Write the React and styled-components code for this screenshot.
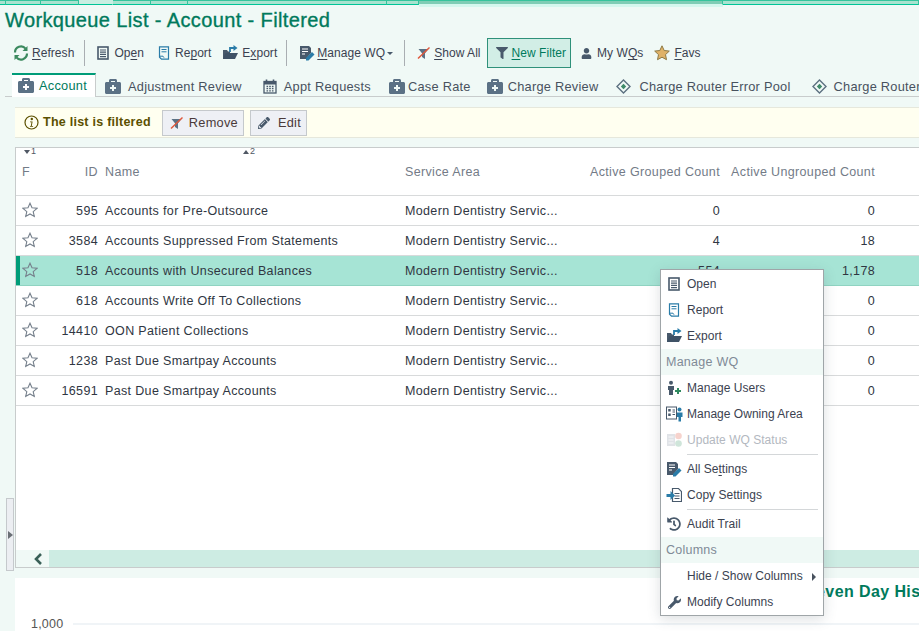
import styled, { createGlobalStyle } from "styled-components";
import { FaBriefcaseMedical, FaFilter, FaUser, FaWrench, FaHistory, FaPencilAlt } from "react-icons/fa";

const GlobalStyle = createGlobalStyle`
  html, body {
    margin: 0;
    padding: 0;
    height: 631px;
    overflow: hidden;
    background: #f0f9f6;
    font-family: "Liberation Sans", Arial, sans-serif;
    font-size: 12.5px;
    letter-spacing: 0.35px;
    color: #3b4250;
  }
`;

const Page = styled.div`
  position: relative;
  width: 919px;
  height: 631px;
  overflow: hidden;
  display: flex;
  flex-direction: column;
`;

const TopStrip = styled.div`
  height: 5px;
  flex: none;
  display: flex;
`;

const StripTab = styled.div`
  width: ${(p) => p.$w}px;
  flex: none;
  box-sizing: border-box;
  background: ${(p) => (p.$active ? "#c9eee2" : p.$muted ? "#7fcdb5" : "#a8e2cf")};
  border-top: 1px solid ${(p) => (p.$active ? "#c9eee2" : "#35c49c")};
  border-right: 1px solid ${(p) => (p.$active ? "#c9eee2" : "#35c49c")};
  border-bottom: 1px solid ${(p) => (p.$muted ? "#d5f7ee" : "#00c497")};
  box-shadow: ${(p) => (p.$muted ? "0 2px 0 #d5f7ee" : "none")};
`;

const Title = styled.h1`
  margin: 0;
  height: 32px;
  padding: 3px 0 0 5px;
  box-sizing: border-box;
  font-size: 20px;
  line-height: 24px;
  font-weight: 400;
  letter-spacing: 0.38px;
  color: #007a5c;
  -webkit-text-stroke: 0.35px #007a5c;
`;

const Toolbar = styled.div`
  height: 30px;
  margin-top: 1px;
  flex: none;
  display: flex;
  align-items: center;
  padding-left: 13px;
  white-space: nowrap;
  font-size: 12px;
  letter-spacing: 0.05px;
`;

const ToolButton = styled.div`
  display: flex;
  align-items: center;
  box-sizing: border-box;
  height: ${(p) => (p.$active ? "30px" : "auto")};
  gap: ${(p) => p.$gap ?? 4}px;
  margin-left: ${(p) => p.$ml || 0}px;
  padding: ${(p) => (p.$active ? "0 4px 0 8px" : "0")};
  color: ${(p) => (p.$active ? "#007a5c" : "#3b4250")};
  background: ${(p) => (p.$active ? "#d2eee6" : "transparent")};
  border: ${(p) => (p.$active ? "1px solid #2f917a" : "none")};
`;

const Key = styled.span`
  text-decoration: underline;
  text-underline-offset: 2px;
`;

const ToolSep = styled.div`
  width: 1px;
  height: 26px;
  background: #a9aeb2;
  margin-left: ${(p) => p.$ml}px;
`;

const Caret = styled.span`
  width: 0;
  height: 0;
  border-left: 3px solid transparent;
  border-right: 3px solid transparent;
  border-top: 3px solid #48596b;
`;

const Tabs = styled.div`
  height: 24px;
  box-sizing: border-box;
  margin: 5px 0 0 5px;
  padding-left: 7px;
  flex: none;
  display: flex;
  align-items: stretch;
  border-bottom: 1px solid #c8cccc;
  white-space: nowrap;
  letter-spacing: 0.25px;
`;

const Tab = styled.div`
  display: flex;
  align-items: center;
  gap: ${(p) => p.$gap ?? 7}px;
  margin-left: ${(p) => p.$ml || 0}px;
  padding: ${(p) => (p.$active ? "0 8px 2px 6px" : "3px 0 0 0")};
  color: ${(p) => (p.$active ? "#007a5c" : "#48525e")};
  background: ${(p) => (p.$active ? "#ffffff" : "transparent")};
  border-top: ${(p) => (p.$active ? "2px solid #009c78" : "none")};
  border-right: ${(p) => (p.$active ? "1px solid #c8cccc" : "none")};
  margin-bottom: ${(p) => (p.$active ? "-1px" : "0")};
  font-size: 12.8px;
`;

const Banner = styled.div`
  margin: 10px 0 0 15px;
  height: 31px;
  flex: none;
  background: #fffff0;
  border-top: 1px solid #e6e8dc;
  border-bottom: 1px solid #e6e8dc;
  box-sizing: border-box;
  display: flex;
  align-items: center;
  padding-left: 9px;
`;

const BannerText = styled.strong`
  margin: -2px 11px 0 4px;
  color: #5c5000;
  font-size: 12.5px;
  letter-spacing: 0.25px;
`;

const BannerButton = styled.div`
  height: 26px;
  box-sizing: border-box;
  display: flex;
  align-items: center;
  gap: ${(p) => p.$gap}px;
  padding: 0 5px 0 7px;
  margin-right: 6px;
  background: #eef0f5;
  border: 1px solid #c5c9cc;
  color: #4a3a3a;
  font-size: 12.8px;
  letter-spacing: 0.25px;
`;

const TablePanel = styled.div`
  margin: 9px 0 0 15px;
  height: 421px;
  flex: none;
  background: #fff;
  border-left: 1px solid #c8cccc;
  border-top: 1px solid #c8cccc;
  border-bottom: 1px solid #c8cccc;
  box-sizing: border-box;
  display: flex;
  flex-direction: column;
`;

const Row = styled.div`
  display: grid;
  grid-template-columns: 40px 42px 300px 162px 160px 155px;
  column-gap: 0;
  align-items: center;
  height: 30px;
  box-sizing: border-box;
  border-bottom: 1px solid ${(p) => (p.$selected ? "#8fd3c1" : "#d8dadb")};
  background: ${(p) => (p.$selected ? "#a6e4d5" : "#fff")};
  box-shadow: ${(p) => (p.$selected ? "inset 4px 0 0 #009c78" : "none")};
  color: #2f3642;
  white-space: nowrap;
`;

const HeaderRow = styled(Row)`
  height: 48px;
  align-items: start;
  padding-top: 16px;
  color: #737b87;
  position: relative;
`;

const SortMark = styled.span`
  position: absolute;
  top: -1px;
  left: ${(p) => p.$x}px;
  font-size: 9px;
  line-height: 9px;
  color: #505864;
  display: flex;
  align-items: center;
  gap: 1px;
  letter-spacing: 0;
`;

const SortArrow = styled.i`
  width: 0;
  height: 0;
  border-left: 3px solid transparent;
  border-right: 3px solid transparent;
  ${(p) => (p.$up ? "border-bottom: 4px solid #505864;" : "border-top: 4px solid #505864;")}
`;

const Cell = styled.div`
  text-align: ${(p) => (p.$right ? "right" : "left")};
  padding-left: ${(p) => p.$pl || 0}px;
  padding-top: 1px;
`;

const StarCell = styled.div`
  padding-left: 6px;
  margin-top: -2px;
`;

const Rows = styled.div`
  flex: 1;
`;

const ScrollBar = styled.div`
  height: 17px;
  flex: none;
  display: flex;
  background: #f0f9f6;
`;

const ScrollButton = styled.div`
  width: 33px;
  display: flex;
  align-items: center;
  justify-content: center;
  padding-left: 10px;
  box-sizing: border-box;
`;

const ScrollThumb = styled.div`
  flex: 1;
  background: #cdece3;
`;

const ChartPanel = styled.div`
  margin: 10px 0 0 15px;
  flex: 1;
  background: #fff;
  overflow: hidden;
`;

const ChartTitle = styled.div`
  margin: 5px 0 0 790px;
  font-size: 16px;
  line-height: 18px;
  font-weight: 700;
  letter-spacing: 0.4px;
  color: #007a5c;
  white-space: nowrap;
`;

const ChartAxis = styled.div`
  display: flex;
  align-items: center;
  gap: 10px;
  margin: 16px 0 0 16px;
  letter-spacing: 0.2px;
  color: #555;
`;

const GridLine = styled.div`
  flex: 1;
  height: 2px;
  background: #f0f4f7;
`;

const Collapse = styled.div`
  position: absolute;
  left: 6px;
  top: 498px;
  width: 6px;
  height: 71px;
  background: #eceef2;
  border: 1px solid #c5c9cc;
  display: flex;
  align-items: center;
`;

const CollapseArrow = styled.span`
  border-top: 4px solid transparent;
  border-bottom: 4px solid transparent;
  border-left: 5px solid #6a6f75;
  margin-left: 1px;
`;

const Menu = styled.div`
  position: absolute;
  left: 660px;
  top: 269px;
  width: 164px;
  height: 347px;
  box-sizing: border-box;
  padding: 1px 0;
  background: #fff;
  border: 1px solid #9fa5a8;
  box-shadow: 0 3px 12px rgba(60, 80, 90, 0.18);
`;

const MenuItem = styled.div`
  height: 26px;
  display: flex;
  align-items: center;
  padding-left: 26px;
  position: relative;
  color: ${(p) => (p.$disabled ? "#b3b8c0" : "#3b4250")};
  white-space: nowrap;
  font-size: 12px;
  letter-spacing: 0.02px;
`;

const MenuIcon = styled.span`
  position: absolute;
  left: 4px;
  top: 5px;
  width: 18px;
  height: 16px;
  display: flex;
  align-items: center;
  justify-content: center;
`;

const MenuHead = styled.div`
  height: 26px;
  display: flex;
  align-items: center;
  padding-left: 5px;
  background: #f0f9f6;
  color: #7f8a96;
  letter-spacing: 0.25px;
`;

const MenuSep = styled.div`
  height: 3px;
  margin-left: 26px;
  margin-right: 5px;
  display: flex;
  align-items: center;
  &::after {
    content: "";
    flex: 1;
    height: 1px;
    background: #d4d7d9;
  }
`;

const SubArrow = styled.span`
  position: absolute;
  right: 7px;
  top: 10px;
  border-top: 4px solid transparent;
  border-bottom: 4px solid transparent;
  border-left: 4px solid #48525e;
`;

const slate = "#48596b";
const blue = "#2a7ca8";

function Svg({ w = 16, h = 16, children }) {
  return (
    <svg width={w} height={h} viewBox={`0 0 ${w} ${h}`} fill="none" style={{ flex: "none", display: "block" }}>
      {children}
    </svg>
  );
}

const RefreshIcon = () => (
  <Svg>
    <path d="M2 7.5A6 6 0 0 1 12.6 3.6" stroke="#3c8a5f" strokeWidth="2.2" />
    <path d="M14.5 1v5h-5z" fill="#3c8a5f" />
    <path d="M14 8.5A6 6 0 0 1 3.4 12.4" stroke="#3c8a5f" strokeWidth="2.2" />
    <path d="M1.5 15v-5h5z" fill="#3c8a5f" />
  </Svg>
);

const OpenIcon = () => (
  <Svg w={12} h={14}>
    <rect x="1" y="1" width="10" height="12" stroke={slate} strokeWidth="1.6" />
    <path d="M3 4h6M3 6.2h6M3 8.4h6M3 10.6h6" stroke={slate} strokeWidth="1.2" />
  </Svg>
);

const ReportIcon = () => (
  <Svg w={12} h={14}>
    <path d="M1.5.8h9v12.4H3.5l-2-2z" stroke={blue} strokeWidth="1.2" />
    <path d="M1.5 10.2h3.5l1 1.5M3.5 3.5h5M3.5 5.8h5" stroke={blue} strokeWidth="1" />
  </Svg>
);

const ExportIcon = () => (
  <Svg>
    <path d="M1 14V5h4l1 1.5h2V14z" fill={slate} />
    <path d="M1 14l2.5-6H16l-3 6z" fill="#3f5266" />
    <path d="M8 7V3h4" stroke={blue} strokeWidth="1.8" />
    <path d="M11.5 0l4 3-4 3z" fill={blue} />
  </Svg>
);

const ManageIcon = () => (
  <Svg>
    <path d="M1 1h9l2 2v5l-5 6H1z" fill={slate} />
    <path d="M3 4h6M3 6.5h6M3 9h3" stroke="#fff" strokeWidth="1" />
    <path d="M7 13l6-6 2.5 2.5-6 6H7z" fill={blue} />
  </Svg>
);

const NoFilterIcon = () => (
  <Svg w={13} h={14}>
    <path d="M1.5 3h10L8 7.2V13l-3-2V7.2z" fill="#5b7185" />
    <path d="M1 12.5L12.5 1.5" stroke="#e0583c" strokeWidth="1.5" />
  </Svg>
);

const GoldStar = () => (
  <Svg>
    <path
      d="M8 .8l2.2 4.7 5.1.6-3.8 3.5 1 5.1L8 12.2l-4.5 2.5 1-5.1L.7 6.1l5.1-.6z"
      fill="#e0b268"
      stroke="#8e7a45"
    />
  </Svg>
);

const OutlineStar = () => (
  <Svg>
    <path
      d="M8 1.2l2 4.6 5 .5-3.8 3.3 1.1 4.9L8 12l-4.3 2.5 1.1-4.9L1 6.3l5-.5z"
      stroke="#76808c"
      strokeWidth="1.1"
    />
  </Svg>
);

const CalendarIcon = () => (
  <Svg w={14} h={15}>
    <rect x="1" y="2.5" width="12" height="11.5" stroke={slate} strokeWidth="1.3" />
    <path d="M1 2.5h12v3H1z" fill={slate} />
    <path d="M3.5 0.5v3M10.5 0.5v3" stroke={slate} strokeWidth="1.6" />
    <path d="M3.5 7.5h1.6M6.2 7.5h1.6M8.9 7.5h1.6M3.5 9.7h1.6M6.2 9.7h1.6M8.9 9.7h1.6M3.5 11.9h1.6M6.2 11.9h1.6M8.9 11.9h1.6" stroke={slate} strokeWidth="1.3" />
  </Svg>
);

const DiamondIcon = () => (
  <Svg w={15} h={15}>
    <path d="M7.5 1l6.5 6.5-6.5 6.5L1 7.5z" stroke="#5c7080" strokeWidth="1.4" />
    <path d="M7.5 4.8l2.7 2.7-2.7 2.7-2.7-2.7z" fill="#3f8a6a" />
  </Svg>
);

const InfoIcon = () => (
  <Svg w={15} h={15}>
    <circle cx="7.5" cy="7.5" r="6.5" stroke="#5c5000" strokeWidth="1.2" />
    <circle cx="7.8" cy="4" r="1.2" fill="#5c5000" />
    <path d="M6 6.5h2.6L7.8 11h1.3v.8H5.9v-.8h.9l.7-3.7H6z" fill="#5c5000" />
  </Svg>
);

const UsersAddIcon = () => (
  <Svg>
    <circle cx="5" cy="2.8" r="2" fill={slate} />
    <path d="M2 6h6v4H7v5H3v-5H2z" fill={slate} />
    <path d="M9 11h6M12 8v6" stroke="#2f8a5f" strokeWidth="2" />
  </Svg>
);

const OwningIcon = () => (
  <Svg w={17} h={16}>
    <rect x="0.5" y="1" width="10" height="12" stroke={slate} />
    <path d="M2.2 3h2.5v2.5H2.2zM2.2 7.5h2.5V10H2.2z" fill={slate} />
    <path d="M6.5 4h2.5M6.5 6h2.5M6.5 8.5h2.5" stroke={slate} />
    <circle cx="13.5" cy="3.5" r="2" fill={blue} />
    <path d="M11 6.5h5.5V11H15v4.5h-2.5V11H11z" fill={blue} />
  </Svg>
);

const StatusIcon = () => (
  <Svg>
    <rect x="1" y="2" width="8" height="12" fill="#e0e3e7" />
    <path d="M2.5 5h5M2.5 8h5M2.5 11h5" stroke="#f7f8f9" />
    <circle cx="12.5" cy="4" r="3.3" fill="#f6d3cd" />
    <circle cx="12.5" cy="11.5" r="3.3" fill="#cfe5da" />
  </Svg>
);

const CopyIcon = () => (
  <Svg>
    <path d="M6.5 1.5h6l3 3v10h-9z" stroke={slate} strokeWidth="1.2" />
    <path d="M8.5 6.5h5M8.5 9h5M8.5 11.5h5" stroke={slate} />
    <path d="M0.5 7h4V4l4.5 4.5L4.5 13v-3h-4z" fill={blue} />
  </Svg>
);

const rows = [
  { id: 595, name: "Accounts for Pre-Outsource", grouped: "0", ungrouped: "0" },
  { id: 3584, name: "Accounts Suppressed From Statements", grouped: "4", ungrouped: "18" },
  { id: 518, name: "Accounts with Unsecured Balances", grouped: "554", ungrouped: "1,178", selected: true },
  { id: 618, name: "Accounts Write Off To Collections", grouped: "0", ungrouped: "0" },
  { id: 14410, name: "OON Patient Collections", grouped: "0", ungrouped: "0" },
  { id: 1238, name: "Past Due Smartpay Accounts", grouped: "0", ungrouped: "0" },
  { id: 16591, name: "Past Due Smartpay Accounts", grouped: "0", ungrouped: "0" },
];

const Brief = () => <FaBriefcaseMedical size={16} color="#5b7185" style={{ flex: "none" }} />;

function App() {
  return (
    <Page>
      <GlobalStyle />
      <TopStrip>
        <StripTab $w={6} />
        <StripTab $w={35} />
        <StripTab $w={38} />
        <StripTab $w={34} $active />
        <StripTab $w={38} />
        <StripTab $w={37} />
        <StripTab $w={199} />
        <StripTab $w={32} />
        <StripTab $w={304} $muted />
        <StripTab $w={196} />
      </TopStrip>
      <Title>Workqueue List - Account - Filtered</Title>
      <Toolbar>
        <ToolButton $gap={3}><RefreshIcon /><span><Key>R</Key>efresh</span></ToolButton>
        <ToolSep $ml={10} />
        <ToolButton $ml={12} $gap={5}><OpenIcon /><span>Op<Key>e</Key>n</span></ToolButton>
        <ToolButton $ml={14} $gap={5}><ReportIcon /><span>Re<Key>p</Key>ort</span></ToolButton>
        <ToolButton $ml={11}><ExportIcon /><span>E<Key>x</Key>port</span></ToolButton>
        <ToolSep $ml={9} />
        <ToolButton $ml={12} $gap={2}><ManageIcon /><span><Key>M</Key>anage WQ</span><Caret /></ToolButton>
        <ToolSep $ml={11} />
        <ToolButton $ml={12}><NoFilterIcon /><span><Key>S</Key>how All</span></ToolButton>
        <ToolButton $ml={6} $active><FaFilter size={12} color={slate} /><span><Key>N</Key>ew Filter</span></ToolButton>
        <ToolButton $ml={10} $gap={5}><FaUser size={11} color={slate} /><span>My W<Key>Q</Key>s</span></ToolButton>
        <ToolButton $ml={11}><GoldStar /><span><Key>F</Key>avs</span></ToolButton>
      </Toolbar>
      <Tabs>
        <Tab $active $gap={5}><Brief />Account</Tab>
        <Tab $ml={9}><Brief />Adjustment Review</Tab>
        <Tab $ml={21}><CalendarIcon />Appt Requests</Tab>
        <Tab $ml={18} $gap={3}><Brief />Case Rate</Tab>
        <Tab $ml={16} $gap={5}><Brief />Charge Review</Tab>
        <Tab $ml={18} $gap={8}><DiamondIcon />Charge Router Error Pool</Tab>
        <Tab $ml={21} $gap={7}><DiamondIcon />Charge Router</Tab>
      </Tabs>
      <Banner>
        <InfoIcon />
        <BannerText>The list is filtered</BannerText>
        <BannerButton $gap={6}><NoFilterIcon />Remove</BannerButton>
        <BannerButton $gap={8}><FaPencilAlt size={12} color={slate} />Edit</BannerButton>
      </Banner>
      <TablePanel>
        <HeaderRow>
          <SortMark $x={8}><SortArrow />1</SortMark>
          <SortMark $x={227}><SortArrow $up />2</SortMark>
          <Cell $pl={6}>F</Cell>
          <Cell $right>ID</Cell>
          <Cell $pl={7}>Name</Cell>
          <Cell $pl={7}>Service Area</Cell>
          <Cell $right>Active Grouped Count</Cell>
          <Cell $right>Active Ungrouped Count</Cell>
        </HeaderRow>
        <Rows>
          {rows.map((row) => (
            <Row key={row.id} $selected={row.selected}>
              <StarCell><OutlineStar /></StarCell>
              <Cell $right>{row.id}</Cell>
              <Cell $pl={7}>{row.name}</Cell>
              <Cell $pl={7}>Modern Dentistry Servic...</Cell>
              <Cell $right>{row.grouped}</Cell>
              <Cell $right>{row.ungrouped}</Cell>
            </Row>
          ))}
        </Rows>
        <ScrollBar>
          <ScrollButton>
            <Svg w={10} h={12}>
              <path d="M8 1L3 6l5 5" stroke="#3a6058" strokeWidth="2.6" />
            </Svg>
          </ScrollButton>
          <ScrollThumb />
        </ScrollBar>
      </TablePanel>
      <ChartPanel>
        <ChartTitle>Seven Day History</ChartTitle>
        <ChartAxis>1,000<GridLine /></ChartAxis>
      </ChartPanel>
      <Collapse><CollapseArrow /></Collapse>
      <Menu>
        <MenuItem><MenuIcon><OpenIcon /></MenuIcon>Open</MenuItem>
        <MenuItem><MenuIcon><ReportIcon /></MenuIcon>Report</MenuItem>
        <MenuItem><MenuIcon><ExportIcon /></MenuIcon>Export</MenuItem>
        <MenuHead>Manage WQ</MenuHead>
        <MenuItem><MenuIcon><UsersAddIcon /></MenuIcon>Manage Users</MenuItem>
        <MenuItem><MenuIcon><OwningIcon /></MenuIcon>Manage Owning Area</MenuItem>
        <MenuItem $disabled><MenuIcon><StatusIcon /></MenuIcon>Update WQ Status</MenuItem>
        <MenuSep />
        <MenuItem><MenuIcon><ManageIcon /></MenuIcon><span>All Se<Key>t</Key>tings</span></MenuItem>
        <MenuItem><MenuIcon><CopyIcon /></MenuIcon>Copy Settings</MenuItem>
        <MenuSep />
        <MenuItem><MenuIcon><FaHistory size={14} color={slate} /></MenuIcon>Audit Trail</MenuItem>
        <MenuHead>Columns</MenuHead>
        <MenuItem>Hide / Show Columns<SubArrow /></MenuItem>
        <MenuItem><MenuIcon><FaWrench size={13} color={slate} /></MenuIcon>Modify Columns</MenuItem>
      </Menu>
    </Page>
  );
}

export default App;
